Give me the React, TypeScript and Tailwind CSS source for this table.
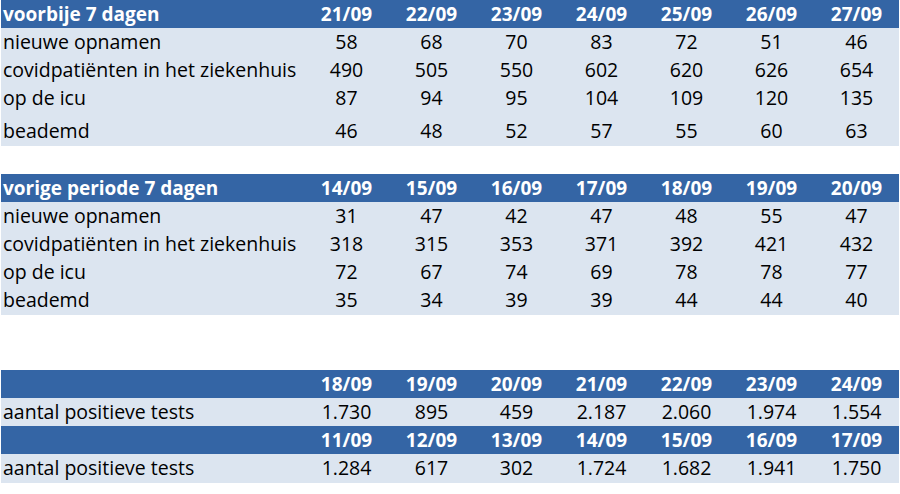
const week1 = {
  title: 'voorbije 7 dagen',
  dates: ['21/09', '22/09', '23/09', '24/09', '25/09', '26/09', '27/09'],
  rows: [
    { label: 'nieuwe opnamen', values: ['58', '68', '70', '83', '72', '51', '46'] },
    { label: 'covidpatiënten in het ziekenhuis', values: ['490', '505', '550', '602', '620', '626', '654'] },
    { label: 'op de icu', values: ['87', '94', '95', '104', '109', '120', '135'] },
    { label: 'beademd', values: ['46', '48', '52', '57', '55', '60', '63'], tall: true },
  ],
}

const week2 = {
  title: 'vorige periode 7 dagen',
  dates: ['14/09', '15/09', '16/09', '17/09', '18/09', '19/09', '20/09'],
  rows: [
    { label: 'nieuwe opnamen', values: ['31', '47', '42', '47', '48', '55', '47'] },
    { label: 'covidpatiënten in het ziekenhuis', values: ['318', '315', '353', '371', '392', '421', '432'] },
    { label: 'op de icu', values: ['72', '67', '74', '69', '78', '78', '77'] },
    { label: 'beademd', values: ['35', '34', '39', '39', '44', '44', '40'] },
  ],
}

const tests = [
  {
    dates: ['18/09', '19/09', '20/09', '21/09', '22/09', '23/09', '24/09'],
    values: ['1.730', '895', '459', '2.187', '2.060', '1.974', '1.554'],
  },
  {
    dates: ['11/09', '12/09', '13/09', '14/09', '15/09', '16/09', '17/09'],
    values: ['1.284', '617', '302', '1.724', '1.682', '1.941', '1.750'],
  },
]

const HeaderRow = ({ title, dates }: { title: string; dates: string[] }) => (
  <div className="flex h-[28px] items-center bg-[#3465a5] text-[19px] font-bold text-white">
    <div className="w-[303px] pl-[2px]">{title}</div>
    {dates.map((d) => (
      <div key={d} className="w-[85px] text-center">
        {d}
      </div>
    ))}
  </div>
)

const DataRow = ({ label, values, tall }: { label: string; values: string[]; tall?: boolean }) => (
  <div className={`flex items-center text-black ${tall ? 'h-[34px] pt-[4px]' : 'h-[28px]'}`}>
    <div className="w-[303px] whitespace-nowrap pl-[2px]">{label}</div>
    {values.map((v, i) => (
      <div key={i} className="w-[85px] text-center">
        {v}
      </div>
    ))}
  </div>
)

const App = () => {
  return (
    <div className="h-[494px] w-[900px] bg-white pl-[1px] text-[19.5px] leading-none [font-family:'Open_Sans',sans-serif]">
      <div className="w-[898px]">
        <div className="bg-[#dce5f0]">
          <HeaderRow title={week1.title} dates={week1.dates} />
          {week1.rows.map((r) => (
            <DataRow key={r.label} {...r} />
          ))}
        </div>

        <div className="mt-[28px] bg-[#dce5f0]">
          <HeaderRow title={week2.title} dates={week2.dates} />
          {week2.rows.map((r) => (
            <DataRow key={r.label} {...r} />
          ))}
          <div className="h-[1px]" />
        </div>

        <div className="mt-[55px] bg-[#dce5f0]">
          {tests.map((t, i) => (
            <div key={i}>
              <HeaderRow title="" dates={t.dates} />
              <DataRow label="aantal positieve tests" values={t.values} />
            </div>
          ))}
          <div className="h-[1px]" />
        </div>
      </div>
    </div>
  )
}

export default App
